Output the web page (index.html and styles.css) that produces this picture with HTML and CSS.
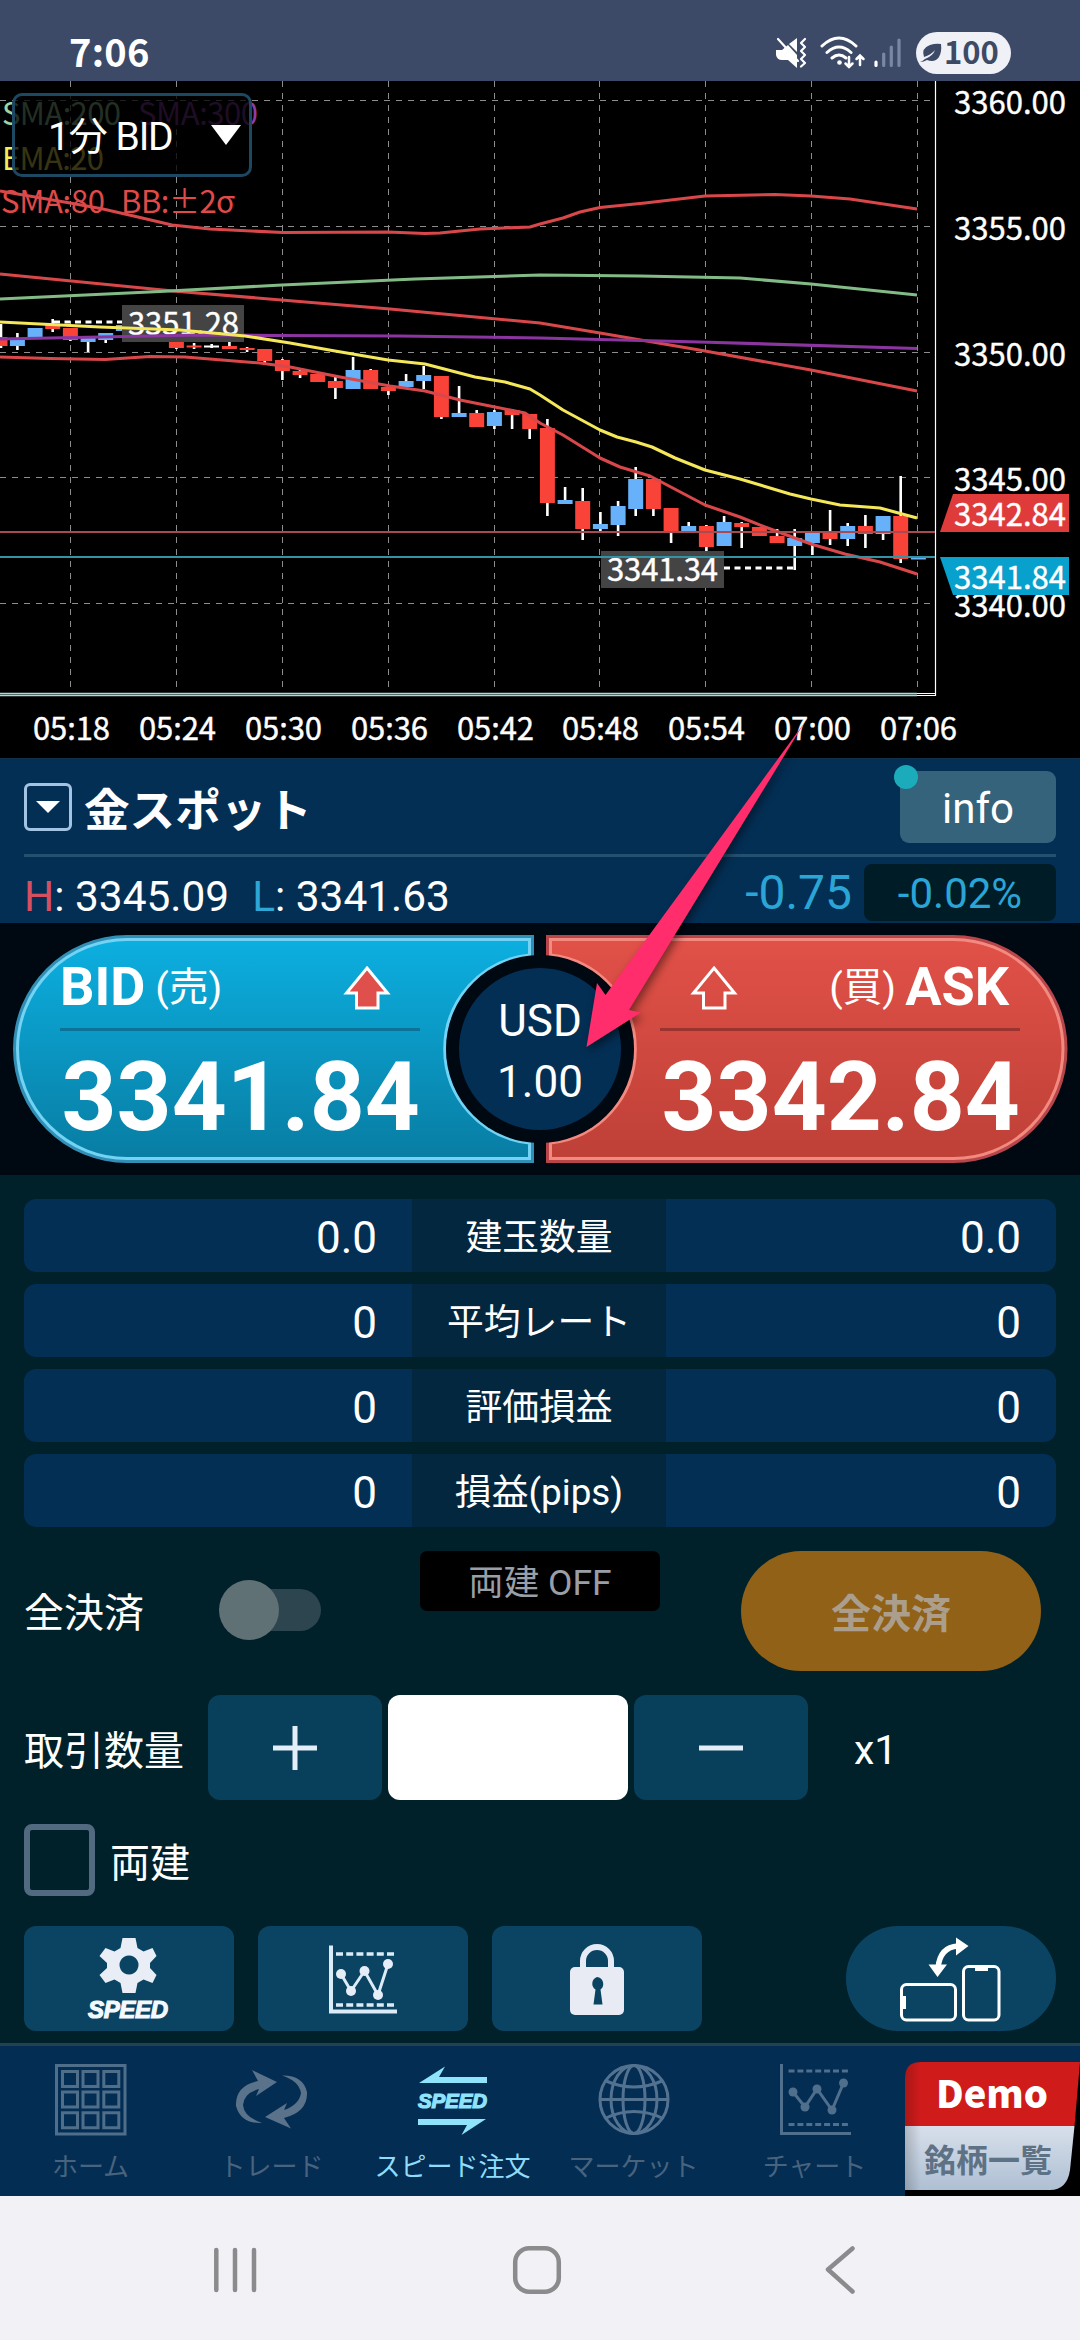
FILE: index.html
```html
<!DOCTYPE html>
<html lang="ja">
<head>
<meta charset="utf-8">
<title>スピード注文</title>
<link rel="stylesheet" href="styles.css">
</head>
<body>
<header class="status">
  <span class="clock">7:06</span>
  <div class="status-icons">
    <svg class="sound" width="32" height="32" viewBox="775 37 32 32"><path d="M776 50h6l6-5 9 10V68l-9-8h-6q-5 0-6-5zM789 44l8-6V52z" fill="#fff"/><path d="M778 39l20 22" stroke="#fff" stroke-width="2.2" stroke-linecap="round"/><path d="M805 39l-4 4 4 4-4 4 4 4-4 4 4 4-4 3.500" fill="none" stroke="#fff" stroke-width="2.200" stroke-linecap="round" stroke-linejoin="round"/></svg>
    <svg class="wifi" width="46" height="36" viewBox="820 35 46 36"><g fill="none" stroke="#fff" stroke-width="3" stroke-linecap="round"><path d="M822 46q17-16 34 0M827 52.500q12-11 24 0M832 58q7-6 14 0"/><path d="M849 57v10m-3.500-3.500 3.500 3.500 3.500-3.500M860 65V55.500m-3.500 3.500 3.500-3.500 3.500 3.500" stroke-width="2.500"/></g><circle cx="839.500" cy="62.500" r="2.300" fill="#fff"/></svg>
    <svg class="signal" width="30" height="32" viewBox="873 37 30 32"><g stroke-width="3.200" stroke-linecap="round"><path d="M876 62V65.500" stroke="#fff"/><path d="M883.700 54V65.500M891.300 47V65.500M899 40V65.500" stroke="#7888a4"/></g></svg>
    <span class="battery"><svg width="24" height="22" viewBox="920 41 24 22"><path d="M925 56q-3-9 6-12 6-2 11-1 1 8-2 13-4 6-12 3-3 2-7 2 3-1 5-3 8-3 10-9-4 5-11 7z" fill="#3c4a66"/></svg><b>100</b></span>
  </div>
</header>

<section class="chart">
  <svg class="plot" width="1080" height="677" viewBox="0 81 1080 677">
    <path class="grid" d="M0 100.500H935M0 226.500H935M0 352.500H935M0 477.500H935M0 603.500H935"/>
    <path class="grid" d="M70.500 81V694M176.500 81V694M282.500 81V694M388.500 81V694M494.500 81V694M599.500 81V694M705.500 81V694M811.500 81V694M917.500 81V694"/>
    <path d="M0 693.500H917M0 695.500H917" stroke="#a5ded6" stroke-width="1.600"/><path d="M917 693.500H936M917 695.500H936M935.500 81V696" stroke="#fff" stroke-width="1.200" fill="none"/>
    <g class="legend">
      <text x="2" y="125" fill="#9fd3a2" textLength="119">SMA:200</text><text x="138" y="125" fill="#8e3da8" textLength="120">SMA:300</text>
      <text x="2" y="170" fill="#f5ee58" textLength="102">EMA:20</text>
      <text x="1" y="213" fill="#e04a48" textLength="104">SMA:80</text><text x="121" y="213" fill="#e04a48" textLength="114">BB:±2σ</text>
    </g>
    <path class="wick" d="M1 324V348M17.400 333V350M52.700 319V332M70.400 328V341M88.100 337V352M105.700 333V343M176.400 337V349M194.100 343V349M211.700 344V348M229.400 341V349M247.100 347V352M264.700 349V363M282.400 359V380M300.100 369V378M335.400 377V399M353.100 357V389M370.700 369V389M388.400 385V395M406.100 374V387M423.700 366V389M441.400 376V419M459.100 386V413M476.700 410V427M494.400 410V429M512.100 409V429M529.700 414V439M547.400 419V516M565.100 487V504M582.700 488V540M600.400 512V531M618.100 501V536M635.700 467V516M653.400 479V516M671.100 508V543M688.700 522V532M706.400 525V552M724.100 516V546M741.700 522V548M777.100 529V543M794.700 529V570M812.400 532V555M830.100 510V545M847.700 523V546M865.400 515V548M883.100 516V540M900.700 476V563"/>
    <path class="up" d="M17.400 339V346M35.100 328V339M88.100 337V342M105.700 333V340M123.400 325V331M353.100 370V389M406.100 381V387M423.700 375V381M459.100 413V417M494.400 412V426M565.100 500V504M600.400 524V529M618.100 506V525M635.700 479V509M688.700 526V532M724.100 522V546M794.700 538V546M812.400 532V543M847.700 526V539M883.100 516V534M918.400 557V559.500"/>
    <path class="down" d="M0 337V346M52.700 325V329M70.400 328V340M176.400 337V348M194.100 345.500V347.500M229.400 346V349M247.100 348V350M264.700 349V361M282.400 360V371M300.100 371V375M317.700 374V382M335.400 381V388M370.700 370V389M388.400 387V391M441.400 376V417M476.700 413V427M512.100 410V415M529.700 414V429M547.400 428V503M582.700 501V529M653.400 479V509M671.100 508V533M706.400 526V547M741.700 523V527M759.400 527V536M777.100 536V543M830.100 532V539M865.400 526V534M900.700 516V559"/>
    <path d="M204 346.500H219" stroke="#fff" stroke-width="2"/>
    <path d="M54 322H122M724 568H794" stroke="#fff" stroke-width="3" stroke-dasharray="6 4.500"/>
    <rect x="122" y="305" width="122" height="37" fill="#444"/><rect x="601" y="551" width="123" height="37" fill="#444"/>
    <text class="axis" x="128" y="335" textLength="111">3351.28</text><text class="axis" x="607" y="581" textLength="111">3341.34</text>
    <g class="line">
      <path stroke="#d8474a" d="M0 191L70 203 103 209 138 217 172 225 210 229 283 232.500 388 232 425 233.500 440 233 480 229 530 227 540 224 563 218 580 212 600 207.500 645 203 705 196 775 194.500 811 196 850 199 917 209"/>
      <path stroke="#d8474a" d="M0 274L173 291 390 309 540 323 600 333 705 351 811 370 917 391"/>
      <path stroke="#83bb87" d="M0 299L160 291.500 282 285 415 279 540 275 640 276 740 278 811 284 917 295"/>
      <path stroke="#8a35a0" d="M0 339L100 337 200 335 282 335.500 400 336 540 338 700 342 917 348.500"/>
      <path stroke="#d8474a" d="M0 357L50 358.500 105 359.500 150 356.500 185 357 260 363 290 367 340 377 390 386 425 391 460 400 490 406 525 413 540 423 563 435 600 458 620 467 650 476 705 505 740 517 765 527 811 544 845 554 880 562 917 574"/>
      <path stroke="#f4e75a" d="M0 322L100 327 180 330 245 336 290 343 335 351 388 360 425 364 475 377 505 382 530 389 540 395 563 410 600 430 617 437 636 442 652 447 675 458 705 470 740 479 790 494 811 499 840 505 880 508 917 518"/>
    </g>
    <path d="M0 532H935" stroke="#a84a52" stroke-width="2"/><path d="M0 557H935" stroke="#3592a5" stroke-width="2"/>
    <g class="axis">
      <text x="954" y="114" textLength="112">3360.00</text><text x="954" y="240" textLength="112">3355.00</text><text x="954" y="366" textLength="112">3350.00</text><text x="954" y="491" textLength="112">3345.00</text><text x="954" y="617" textLength="112">3340.00</text>
      <path d="M953 494H1069V532H940z" fill="#df3b3b"/><path d="M940 557H1069V595H953z" fill="#08a0cc"/>
      <text x="954" y="526" textLength="112">3342.84</text><text x="954" y="589" textLength="112">3341.84</text>
      <text x="33" y="740" textLength="77">05:18</text><text x="139" y="740" textLength="77">05:24</text><text x="245" y="740" textLength="77">05:30</text><text x="351" y="740" textLength="77">05:36</text><text x="457" y="740" textLength="77">05:42</text><text x="562" y="740" textLength="77">05:48</text><text x="668" y="740" textLength="77">05:54</text><text x="774" y="740" textLength="77">07:00</text><text x="880" y="740" textLength="77">07:06</text>
    </g>
  </svg>
  <div class="period"><span>1分</span><span>BID</span><i class="caret"></i></div>
</section>

<section class="summary">
  <div class="title-row">
    <span class="picker"><i class="caret"></i></span>
    <h1>金スポット</h1>
    <button class="info">info<i class="dot"></i></button>
  </div>
  <div class="stats">
    <span class="hl"><em class="hi">H</em>: 3345.09</span>
    <span class="hl"><em class="lo">L</em>: 3341.63</span>
    <span class="diff">-0.75</span>
    <span class="pct">-0.02%</span>
  </div>
</section>

<section class="prices">
  <svg class="shapes" width="1080" height="252" viewBox="0 923 1080 252">
    <defs>
      <linearGradient id="gb" x2="0" y2="1"><stop offset="0" stop-color="#0cafe0"/><stop offset="1" stop-color="#087da3"/></linearGradient>
      <linearGradient id="gr" x2="0" y2="1"><stop offset="0" stop-color="#e15148"/><stop offset="1" stop-color="#be4037"/></linearGradient>
    </defs>
    <path d="M534 935H127A114 114 0 0 0 127 1163H534V1142A93.500 93.500 0 0 1 534 956z" fill="#318fb5"/>
    <path d="M529.500 939.500H127A109.500 109.500 0 0 0 127 1158.500H529.500V1143A94.500 94.500 0 0 1 529.500 955z" fill="url(#gb)" stroke="#72d3f4" stroke-width="3"/>
    <path d="M546 935H953.500A114 114 0 0 1 953.500 1163H546V1142A93.500 93.500 0 0 0 546 956z" fill="#b8454a"/>
    <path d="M550.500 939.500H953.500A109.500 109.500 0 0 1 953.500 1158.500H550.500V1143A94.500 94.500 0 0 0 550.500 955z" fill="url(#gr)" stroke="#f38a80" stroke-width="3"/>
    <circle cx="540" cy="1049" r="94" fill="#000812"/><circle cx="540" cy="1049" r="81" fill="#042f55"/>
  </svg>
  <div class="side bid">
    <div class="side-head"><b>BID</b><span>(売)</span><svg width="48" height="45" viewBox="343 962 48 45"><path d="M367 965L387.500 990H378V1005H356.500V990H346.500z" fill="#df4f4b" stroke="#fff" stroke-width="3"/></svg></div>
    <strong>3341.84</strong>
  </div>
  <div class="unit"><span>USD</span><span>1.00</span></div>
  <div class="side ask">
    <div class="side-head"><svg width="48" height="45" viewBox="343 962 48 45"><path d="M367 965L387.500 990H378V1005H356.500V990H346.500z" fill="none" stroke="#fff" stroke-width="3"/></svg><span>(買)</span><b>ASK</b></div>
    <strong>3342.84</strong>
  </div>
  <svg class="pointer" width="240" height="350" viewBox="575 715 240 350"><path d="M804.500 722.500L605.500 995 597 983 586.500 1047 641 1012.500 629 1010z" fill="#ff2d6b"/></svg>
</section>

<main class="order">
  <div class="positions">
    <div class="pos"><span>0.0</span><label>建玉数量</label><span>0.0</span></div>
    <div class="pos"><span>0</span><label>平均レート</label><span>0</span></div>
    <div class="pos"><span>0</span><label>評価損益</label><span>0</span></div>
    <div class="pos"><span>0</span><label>損益(pips)</label><span>0</span></div>
  </div>
  <div class="close-row">
    <label>全決済</label>
    <span class="toggle"><i></i></span>
    <span class="hedge-state">両建 OFF</span>
    <button class="close-all">全決済</button>
  </div>
  <div class="qty-row">
    <label>取引数量</label>
    <button class="step"><svg width="44" height="44"><path d="M22 0V44M0 22H44" stroke="#e4eef8" stroke-width="5"/></svg></button>
    <span class="qty"></span>
    <button class="step"><svg width="44" height="44"><path d="M0 22H44" stroke="#e4eef8" stroke-width="5"/></svg></button>
    <span class="mult">x1</span>
  </div>
  <div class="hedge-row"><i class="check"></i><label>両建</label></div>
  <div class="tools">
    <button class="tool"><svg width="90" height="90" viewBox="84 1934 90 90"><path fill="#e8edf6" fill-rule="evenodd" d="M122.500 1938h13l2 10 6 3.500 9-3.500 4 8 -6.500 7v5l6.500 7-4 8-9-3.500-6 3.500-2 10h-13l-2-10-6-3.500-9 3.500-6-8 7.500-7v-5l-7.500-7 6-8 9 3.500 6-3.500zM129 1955.500a9.500 9.500 0 1 0 .01 0z"/><text class="speed" x="88" y="2018" textLength="80" fill="#f4f8ff" stroke="#f4f8ff" font-size="24">SPEED</text></svg></button>
    <button class="tool"><svg width="72" height="72" viewBox="327 1942 72 72"><g fill="none" stroke="#dcebf8"><path d="M331 1944.500V2010.500H397" stroke-width="4"/><path d="M336 1953H394M336 2004H394" stroke-width="3.500" stroke-dasharray="7 3.200"/><path d="M341 1973L351 1990 364.500 1970 378 1994 388 1963" stroke-width="3"/></g><g fill="#e4edf8"><circle cx="341" cy="1973" r="5"/><circle cx="351" cy="1990" r="5"/><circle cx="364.500" cy="1970" r="5"/><circle cx="378" cy="1994" r="5"/><circle cx="388" cy="1963" r="5"/></g></svg></button>
    <button class="tool"><svg width="60" height="76" viewBox="567 1942 60 76"><path d="M583 1970V1962A14 14 0 0 1 611 1962V1970" fill="none" stroke="#e4eaf6" stroke-width="6"/><rect x="570" y="1968" width="54" height="48" rx="5" fill="#e8ebf4"/><path d="M597 1978a7 7 0 0 1 3.500 12.500l2 15h-9l2-15A7 7 0 0 1 597 1978z" fill="#0a4462"/></svg></button>
    <button class="tool rotate"><svg width="106" height="90" viewBox="899 1932 106 90"><g fill="none" stroke="#fff" stroke-width="3"><rect x="902.500" y="1982.500" width="54" height="35.500" rx="5"/><rect x="964.500" y="1964.500" width="35.500" height="53.500" rx="5"/><path d="M939 1966Q941 1945 959 1944" stroke-width="5.500"/></g><g fill="#fff"><path d="M957 1935.500L969.500 1944 957 1953.500zM929.500 1962.500H948L938.500 1975zM902 1994h5v13h-5zM976 1964h13v5h-13z"/></g></svg></button>
  </div>
</main>

<nav class="tabs">
  <a class="tab"><svg width="74" height="74" viewBox="54 2062 74 74"><g fill="none" stroke="#4f6e8a" stroke-width="3"><rect x="56.500" y="2065.500" width="68.500" height="68.500"/><path d="M62.500 2071.500h15v15h-15zM83 2071.500h15v15h-15zM103.800 2071.500h15v15h-15zM62.500 2092h15v15h-15zM83 2092h15v15h-15zM103.800 2092h15v15h-15zM62.500 2112.800h15v15h-15zM83 2112.800h15v15h-15zM103.800 2112.800h15v15h-15z"/></g></svg><span>ホーム</span></a>
  <a class="tab"><svg width="74" height="74" viewBox="235 2062 74 74"><path fill="#5a728a" d="M252 2070L277 2082 256 2096 259 2089Q244 2093 243 2105 244 2117 262 2123 241 2124 236 2106 235 2086 258 2081zM291 2128.500L265 2117 287 2103 284 2110Q299 2105 301 2093 299 2081 282 2075.500 303 2075 307 2092 308 2112 284 2118z"/></svg><span>トレード</span></a>
  <a class="tab active"><svg width="74" height="74" viewBox="416 2062 74 74"><path fill="#8fe4fb" d="M487 2077V2083H419L445 2066.500 439 2077zM418 2119H486L461.500 2135 467 2125H418z"/><text class="speed" x="418" y="2108" textLength="69" fill="#8fe4fb" stroke="#8fe4fb" font-size="20.500">SPEED</text></svg><span>スピード注文</span></a>
  <a class="tab"><svg width="74" height="74" viewBox="597 2062 74 74"><g fill="none" stroke="#537290" stroke-width="3"><circle cx="634" cy="2099.500" r="34"/><ellipse cx="634" cy="2099.500" rx="11" ry="34"/><ellipse cx="634" cy="2099.500" rx="23" ry="34"/><path d="M600 2099.500H668M606 2081Q634 2093 662 2081M606 2118Q634 2105 662 2118"/></g></svg><span>マーケット</span></a>
  <a class="tab"><svg width="74" height="74" viewBox="777 2062 74 74"><g fill="none" stroke="#4f6f8c" stroke-width="3"><path d="M780.500 2064V2133.500H850"/><path d="M787.500 2071H847M787.500 2124.500H847" stroke-dasharray="6 2.900"/><path d="M792 2092L804 2107 816 2089 831 2110 842.500 2083"/></g><g fill="#4f6f8c"><circle cx="792" cy="2092" r="4.500"/><circle cx="804" cy="2107" r="4.500"/><circle cx="816" cy="2089" r="4.500"/><circle cx="831" cy="2110" r="4.500"/><circle cx="842.500" cy="2083" r="4.500"/></g></svg><span>チャート</span></a>
  <div class="demo">
    <svg width="175" height="150" viewBox="905 2046 175 150">
      <defs><linearGradient id="gd" x2="0" y2="1"><stop offset="0" stop-color="#d8dfeb"/><stop offset="1" stop-color="#aec0d3"/></linearGradient><linearGradient id="edge"><stop offset="0" stop-color="#000" stop-opacity=".3"/><stop offset="1" stop-color="#000" stop-opacity="0"/></linearGradient></defs>
      <path d="M905 2062H1080V2196H905z" fill="#000"/><path d="M905 2062h16q-16 1-16 18z" fill="#032d52"/>
      <path d="M905 2126V2078Q905 2062 921 2062H1080L1074.500 2126z" fill="#d01b1b"/>
      <path d="M905 2126H1074.500L1070 2170Q1067 2190 1050 2190H905z" fill="url(#gd)"/>
      <path d="M905 2078Q905 2062 921 2062V2190H905z" fill="url(#edge)" opacity=".6"/>
    </svg>
    <b>Demo</b><span>銘柄一覧</span>
  </div>
</nav>

<footer class="sysnav">
  <svg width="46" height="50" viewBox="212 2245 46 50"><path d="M216.300 2250V2290M235 2250V2290M254 2250V2290" stroke="#8b8b8d" stroke-width="4.500" stroke-linecap="round"/></svg>
  <svg width="50" height="50" viewBox="512 2245 50 50"><rect x="515.200" y="2248.200" width="43.600" height="43.600" rx="14" fill="none" stroke="#8b8b8d" stroke-width="4.500"/></svg>
  <svg width="32" height="50" viewBox="825 2245 32 50"><path d="M852.500 2248.500L828 2269.500 852.500 2291.500" fill="none" stroke="#8b8b8d" stroke-width="4.500" stroke-linecap="round" stroke-linejoin="round"/></svg>
</footer>
</body>
</html>
```

FILE: styles.css
```css
* { box-sizing: border-box; }
body { margin: 0; width: 1080px; height: 2340px; overflow: hidden; background: #00202a; color: #fff; font-family: Roboto, "Noto Sans CJK JP", sans-serif; }
svg { display: block; flex: none; }
button { border: 0; padding: 0; color: inherit; font-family: inherit; display: flex; align-items: center; justify-content: center; }
h1 { margin: 0; }
em { font-style: normal; }

/* device status bar */
.status { height: 81px; background: #3c4a67; display: flex; justify-content: space-between; padding: 0 69px; }
.clock { font: 700 38px/40px "Noto Sans CJK JP", sans-serif; padding-top: 31px; letter-spacing: .3px; }
.status-icons { display: flex; align-items: center; padding-top: 25px; height: 81px; }
.wifi { margin-left: 13px; }
.signal { margin-left: 7px; }
.battery { margin-left: 13px; width: 95px; height: 42px; border-radius: 21px; background: #eff1f7; color: #3c4a66; display: flex; align-items: center; padding-left: 3px; }
.battery b { font: 700 31px/38px "Noto Sans CJK JP", sans-serif; margin: -4px 0 0 1px; }

/* chart */
.chart { position: relative; height: 677px; background: #000; }
.grid { stroke: #8d8d8d; stroke-width: 1; stroke-dasharray: 6 6; }
.legend, .axis { font: 400 31px "Noto Sans CJK JP", sans-serif; fill: #fff; }
.axis { stroke: #fff; stroke-width: .4; }
.axis path { stroke: none; }
.wick { stroke: #fff; stroke-width: 2.6; }
.up { stroke: #67b1fa; stroke-width: 15; }
.down { stroke: #f94238; stroke-width: 15; }
.line { fill: none; stroke-width: 3.1; stroke-linejoin: round; }
.period { position: absolute; left: 12px; top: 12px; width: 240px; height: 84px; border: 3px solid #1d4862; border-radius: 10px; background: rgba(0, 0, 0, .78); display: flex; align-items: center; padding: 4px 8px 0 33px; font-size: 39px; line-height: 60px; gap: 9px; letter-spacing: -1.2px; }
.caret { width: 0; height: 0; border: solid transparent; border-width: 20px 15px 0; border-top-color: #fff; }
.period .caret { margin: -4px 0 0 auto; }

/* instrument summary */
.summary { height: 165px; background: #042f55; border-top: 1px solid #10324c; padding: 0 24px; }
.title-row { height: 98px; border-bottom: 3px solid #24506f; display: flex; align-items: center; }
.picker { width: 48px; height: 48px; border: 3px solid #a3c3e2; border-radius: 6px; display: flex; align-items: center; justify-content: center; }
.picker .caret { border-width: 12px 12px 0; }
.title-row h1 { font: 700 45.6px/60px "Noto Sans CJK JP", sans-serif; margin-left: 12px; }
.info { position: relative; width: 156px; height: 72px; margin-left: auto; border-radius: 9px; background: #35637b; font-size: 42px; padding-top: 3px; }
.dot { position: absolute; left: -6px; top: -6px; width: 24px; height: 24px; border-radius: 50%; background: #1cabbb; }
.stats { height: 66px; display: flex; align-items: center; font-size: 42px; line-height: 60px; padding-top: 4px; }
.hl { padding-top: 9px; white-space: nowrap; margin-right: 23px; font-size: 42.4px; }
.hi { color: #d64f60; }
.lo { color: #2ea6d6; }
.diff, .pct { color: #2aa5d6; }
.diff { margin-left: auto; font-size: 48px; padding: 1px 12px 0 0; }
.pct { width: 192px; height: 57px; border-radius: 8px; background: #001c27; text-align: center; line-height: 60px; }

/* bid / ask */
.prices { position: relative; height: 252px; background: #000812; display: flex; justify-content: space-between; padding: 0 60px; }
.shapes { position: absolute; left: 0; top: 0; }
.pointer { position: absolute; left: 575px; top: -208px; filter: drop-shadow(2px 5px 4px rgba(0, 0, 0, .45)); }
.side { position: relative; width: 360px; }
.side-head { height: 108px; display: flex; align-items: center; border-bottom: 3px solid #0b7397; padding: 23px 29px 0 0; }
.side-head b { font-size: 54px; line-height: 60px; }
.side-head span { font-size: 39.5px; line-height: 60px; padding-top: 1px; }
.bid span { margin-left: 10px; }
.bid svg, .ask span { margin-left: auto; }
.ask .side-head { border-color: #9b332f; padding: 23px 11px 0 30px; }
.ask b { margin-left: 9px; }
.side strong { display: block; font-size: 96px; line-height: 100px; margin-top: 16px; white-space: nowrap; padding-left: 1.5px; }
.unit { position: relative; width: 120px; text-align: center; font-size: 44px; line-height: 61px; padding-top: 68px; display: flex; flex-direction: column; }

/* order form */
.order { height: 868px; padding: 24px 24px 0; }
.positions { display: grid; gap: 12px; }
.pos { height: 73px; display: grid; grid-template-columns: 388px 254px 1fr; border-radius: 12px; background: #032f54; overflow: hidden; line-height: 78px; }
.pos span { font-size: 44px; text-align: right; padding-right: 35px; }
.pos label { font-size: 36.8px; text-align: center; background: #03273f; line-height: 77px; }
label { white-space: nowrap; }
.close-row { display: flex; height: 120px; margin-top: 24px; font-size: 40px; }
.close-row > label { width: 195px; line-height: 125px; }
.toggle { width: 102px; height: 42px; margin-top: 38px; border-radius: 21px; background: linear-gradient(#2c454f, #2c454f) 20px 0 / 82px 42px no-repeat; display: flex; align-items: center; }
.toggle i { width: 60px; height: 60px; flex: none; border-radius: 50%; background: #607176; }
.hedge-state { width: 240px; height: 60px; margin-left: 99px; border-radius: 7px; background: #000; color: #9a9ea6; font-size: 35.5px; line-height: 65px; text-align: center; }
.close-all { width: 300px; margin-left: 81px; border-radius: 60px; background: #906116; color: #ab9e8c; font-size: 40px; font-weight: 700; padding-top: 0; }
.qty-row { display: flex; align-items: center; height: 105px; margin-top: 24px; font-size: 40px; }
.qty-row label { width: 184px; padding-top: 0; }
.step { width: 174px; height: 105px; border-radius: 12px; background: #083f5b; }
.qty { width: 240px; height: 105px; margin: 0 6px; border-radius: 12px; background: #fff; }
.mult { margin-left: 46px; font-size: 41px; padding-top: 5px; }
.hedge-row { display: flex; align-items: center; height: 72px; margin-top: 24px; font-size: 40px; }
.check { width: 71px; height: 72px; border: 6px solid #526a80; border-radius: 8px; }
.hedge-row label { margin-left: 15px; padding-top: 0; }
.tools { display: flex; gap: 24px; height: 105px; margin-top: 30px; }
.tool { width: 210px; border-radius: 12px; background: #0a4462; }
.rotate { margin-left: auto; border-radius: 52px; }
.speed { font-family: "Liberation Sans", sans-serif; font-weight: 700; font-style: italic; stroke-width: 1.2; }

/* bottom tabs */
.tabs { height: 153px; border-top: 3px solid #23414f; background: #032d52; display: flex; }
.tab { width: 181px; padding-top: 16px; display: flex; flex-direction: column; align-items: center; color: #48637d; font: 400 26px/40px "Noto Sans CJK JP", sans-serif; white-space: nowrap; }
.tab span { margin-top: 9px; }
.active { color: #8fdcfa; }
.demo { position: relative; width: 175px; display: flex; flex-direction: column; align-items: center; padding: 14px 4px 0 0; font-family: "Noto Sans CJK JP", sans-serif; font-weight: 700; }
.demo svg { position: absolute; left: 0; top: 0; }
.demo b, .demo span { position: relative; }
.demo b { font-size: 38px; line-height: 64px; padding-left: 3px; }
.demo span { font-size: 32px; line-height: 64px; color: #5e7286; padding: 2px 5px 0 0; }

/* system navigation */
.sysnav { height: 144px; background: #f2f1f5; display: grid; grid-template-columns: 300px 313px 32px; padding: 49px 0 0 212px; }
```
